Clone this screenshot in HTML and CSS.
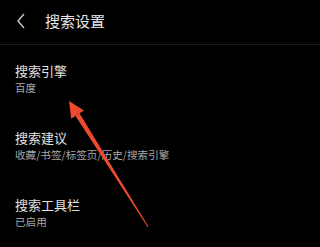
FILE: index.html
```html
<!DOCTYPE html>
<html lang="zh-CN">
<head>
<meta charset="utf-8">
<link rel="stylesheet" href="styles.css">
</head>
<body>
<div class="page">
  <header class="header">
    <svg class="back" width="10" height="16" viewBox="0 0 10 16"><path d="M8 1 L2 8 L8 15" fill="none" stroke="#cfcfcf" stroke-width="1.3"/></svg>
    <h1 class="title">搜索设置</h1>
  </header>
  <ul class="list">
    <li class="item"><div class="item-title">搜索引擎</div><div class="item-sub">百度</div></li>
    <li class="item"><div class="item-title">搜索建议</div><div class="item-sub">收藏/书签/标签页/历史/搜索引擎</div></li>
    <li class="item"><div class="item-title">搜索工具栏</div><div class="item-sub">已启用</div></li>
  </ul>
  <svg class="arrow" width="320" height="247" viewBox="0 0 320 247">
    <polygon points="69,101 84,110.5 71.2,118.7" fill="#ee4a32"/>
    <polygon points="79.5,113.3 75.5,116 147.6,227 148.4,226.5" fill="#ee4a32"/>
  </svg>
</div>
</body>
</html>
```
FILE: styles.css
```css
* { box-sizing: border-box; }
html, body { margin: 0; padding: 0; background: #000; }
body { font-family: "Noto Sans CJK SC", "Noto Sans", sans-serif; }
.page { position: relative; width: 320px; height: 247px; overflow: hidden; background: #000; }
.header { height: 45px; display: flex; align-items: center; border-bottom: 1px solid #1c1c1c; padding-left: 16px; padding-bottom: 2px; }
.back { display: block; margin-right: 19px; }
.title { margin: 0; font-size: 15px; font-weight: normal; color: #e6e6e6; line-height: 20px; }
.list { list-style: none; margin: 0; padding: 0; }
.item { padding: 18px 15px 17px; display: flex; flex-direction: column; gap: 2px; }
.item-title { font-size: 13px; line-height: 16px; color: #e2e2e2; }
.item-sub { font-size: 10.6px; line-height: 14px; color: #a6a6a6; }
.arrow { position: absolute; left: 0; top: 0; pointer-events: none; }
```
